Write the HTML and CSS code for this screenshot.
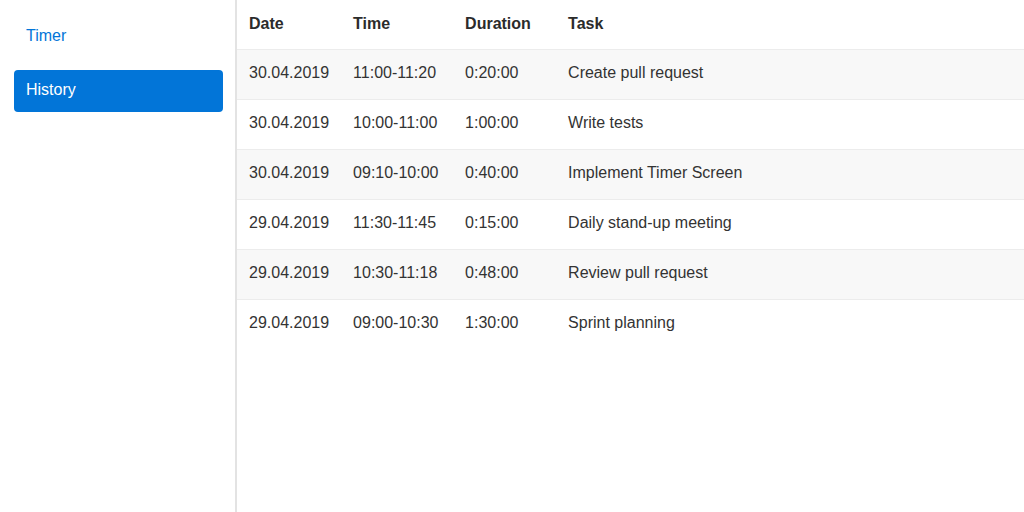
FILE: index.html
```html
<!DOCTYPE html>
<html>
<head>
<meta charset="utf-8">
<link rel="stylesheet" href="styles.css">
</head>
<body>
<div class="app">
  <nav class="sidebar">
    <a class="nav-link" href="#">Timer</a>
    <a class="nav-link active" href="#">History</a>
  </nav>
  <main class="main">
    <table class="history">
      <thead>
        <tr>
          <th class="c-date">Date</th>
          <th class="c-time">Time</th>
          <th class="c-dur">Duration</th>
          <th class="c-task">Task</th>
        </tr>
      </thead>
      <tbody>
        <tr><td>30.04.2019</td><td>11:00-11:20</td><td>0:20:00</td><td>Create pull request</td></tr>
        <tr><td>30.04.2019</td><td>10:00-11:00</td><td>1:00:00</td><td>Write tests</td></tr>
        <tr><td>30.04.2019</td><td>09:10-10:00</td><td>0:40:00</td><td>Implement Timer Screen</td></tr>
        <tr><td>29.04.2019</td><td>11:30-11:45</td><td>0:15:00</td><td>Daily stand-up meeting</td></tr>
        <tr><td>29.04.2019</td><td>10:30-11:18</td><td>0:48:00</td><td>Review pull request</td></tr>
        <tr><td>29.04.2019</td><td>09:00-10:30</td><td>1:30:00</td><td>Sprint planning</td></tr>
      </tbody>
    </table>
  </main>
</div>
</body>
</html>
```
FILE: styles.css
```css
html, body {
  margin: 0;
  padding: 0;
  height: 100%;
}
body {
  font-family: "Liberation Sans", Arial, sans-serif;
  font-size: 16px;
  color: #333333;
  background: #ffffff;
}
.app {
  display: flex;
  height: 512px;
}
.sidebar {
  width: 237px;
  flex: none;
  box-sizing: border-box;
  border-right: 2px solid #e3e3e3;
  padding: 16px 12px 14px 14px;
  display: flex;
  flex-direction: column;
  gap: 12px;
}
.nav-link {
  display: block;
  height: 42px;
  box-sizing: border-box;
  line-height: 40px;
  padding: 0 12px 2px;
  border-radius: 4px;
  color: #0275d8;
  text-decoration: none;
}
.nav-link.active {
  background: #0275d8;
  color: #ffffff;
}
.main {
  flex: 1;
}
.history {
  width: 100%;
  border-collapse: collapse;
}
.history th,
.history td {
  box-sizing: border-box;
  padding: 0 12px 2px;
  text-align: left;
  vertical-align: middle;
  white-space: nowrap;
}
.history th {
  height: 49px;
  padding-bottom: 0;
  font-weight: bold;
  color: #2b2b2b;
}
.history td {
  height: 50px;
}
.history tbody tr {
  border-top: 1px solid #ececec;
}
.history tbody tr:nth-child(odd) {
  background: #f8f8f8;
}
.c-date { width: 104px; }
.c-time { width: 112px; }
.c-dur { width: 103px; }
.c-task { width: auto; }
```
